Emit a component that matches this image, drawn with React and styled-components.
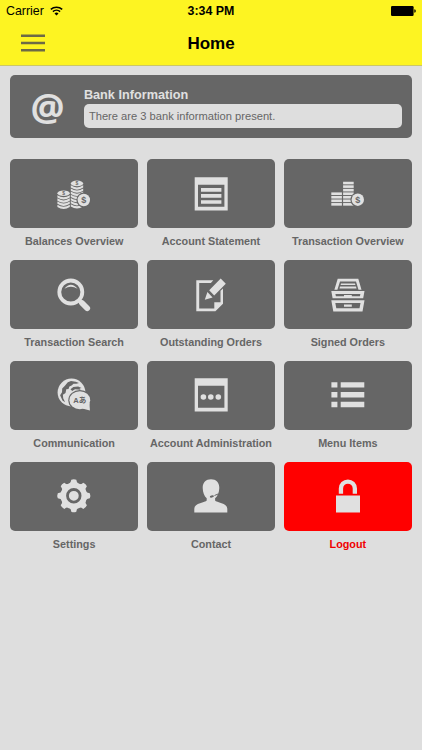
import React from 'react'
import styled, { createGlobalStyle } from 'styled-components'

const LIGHT = '#e0e0e0'
const DARK = '#666666'

const tiles = [
    { label: 'Balances Overview', icon: 'coins' },
    { label: 'Account Statement', icon: 'statement' },
    { label: 'Transaction Overview', icon: 'stacks' },
    { label: 'Transaction Search', icon: 'search' },
    { label: 'Outstanding Orders', icon: 'edit' },
    { label: 'Signed Orders', icon: 'drawers' },
    { label: 'Communication', icon: 'globe' },
    { label: 'Account Administration', icon: 'admin' },
    { label: 'Menu Items', icon: 'list' },
    { label: 'Settings', icon: 'gear' },
    { label: 'Contact', icon: 'contact' },
    { label: 'Logout', icon: 'lock', danger: true },
]

const Dollar = ({ x, y, size }) => (
    <text x={x} y={y} fontSize={size} fontWeight="bold" textAnchor="middle" fill={DARK} fontFamily="Liberation Sans, sans-serif">$</text>
)

const Coin = ({ y }) => (
    <g>
        <circle cx="27.8" cy={y} r="7.4" fill={DARK} />
        <circle cx="27.8" cy={y} r="6.2" />
        <Dollar x="27.8" y={y + 3.2} size="9" />
    </g>
)

const CoinStack = ({ x, top, count }) => (
    <g>
        <ellipse cx={x} cy={top + 2.7} rx="6.2" ry="2.8" />
        {[...Array(count)].map((_, i) => (
            <path
                key={i}
                d={`M${x - 6.2} ${top + 4.6 + i * 3.15}q6.2 4.2 12.4 0v2.3q-6.2 4.2 -12.4 0z`}
            />
        ))}
        <Dollar x={x} y={top + 4.5} size="5" />
    </g>
)

const Window = () => (
    <path fillRule="evenodd" d="M1.7 1.2h33v33.2h-33zM5 8.8v22h26.4v-22z" />
)

const icons = {
    coins: (
        <>
            <CoinStack x={7.6} top={14.6} count={4} />
            <CoinStack x={21} top={4.7} count={7} />
            <Coin y={24} />
        </>
    ),
    statement: (
        <>
            <Window />
            <path d="M8 12.1h20.4v3.6H8zM8 18.1h20.4v3.6H8zM8 24.2h20.4v3.6H8z" />
        </>
    ),
    stacks: (
        <>
            {[0, 1, 2, 3].map((i) => <rect key={i} x="1.3" y={16.4 + i * 3.55} width="10.6" height="2.6" />)}
            {[0, 1, 2, 3, 4, 5, 6].map((i) => <rect key={i} x="13.1" y={5.75 + i * 3.55} width="10.6" height="2.6" />)}
            <Coin y={23.7} />
        </>
    ),
    search: (
        <>
            <circle cx="14.8" cy="15" r="11.5" fill="none" stroke={LIGHT} strokeWidth="3.8" />
            <path d="M8.4 11.7Q14.8 3.8 21.6 11.7Q14.8 7.6 8.4 11.7z" />
            <path d="M22.5 22.7l3 3" stroke={LIGHT} strokeWidth="3.8" />
            <path d="M26 26l5.2 5.2" stroke={LIGHT} strokeWidth="5.8" strokeLinecap="round" />
        </>
    ),
    edit: (
        <>
            <path d="M3.3 3.3h17l-2.4 2.6H6.2v25.5h15.1v-6.1h6.2V13.8l2.5-2.3v15.2l-7.6 7.6H3.3z" />
            <path d="M16.2 13.2L27.7 1.6l5.1 5.1-11.6 11.7zM14.4 15.1l5.2 5.3-7.8 2.4z" />
        </>
    ),
    drawers: (
        <>
            <path d="M7.7 1.7h20.6l3.2 11h-3L26 4.4H10L7.4 12.7h-3z" />
            <path d="M11 6.4h14l.4 1.7H10.6zM10 9.6h16l.5 2h-17z" />
            <path fillRule="evenodd" d="M1.3 14.1h33.2l-1.3 7.2H2.6zM5.4 16.9l.5 2.4h24l.5-2.4z" />
            <path fillRule="evenodd" d="M1.3 23.2h33.2l-2 11.2H3.3zM5.3 26l1 5.2h23.2l1-5.2z" />
            <path d="M14 18h7.8v2.6H14zM14 27.4h7.8v2.3H14z" />
        </>
    ),
    globe: (
        <>
            <circle cx="15.5" cy="15.5" r="13.9" />
            <path
                fill={DARK}
                d="M11.8 5.3l3.2-1.2 4.7.7 3.3 1.3-2.6.6-2.9.1-1.9 1.7-2.2.9-.9 2.5-2.2.4-.8 3.6-2.6 1.8.3 3.5 1.9 4-2.6-1.6-2.4-5.3 1.9-3.1.2-3.6 2.7-2.9z"
            />
            <path fill={DARK} d="M14.5 12.2l2.8-2.2 4.8-.6 3.5 1.6-2 .5 1 1.3-5.6-.6-2.8 1.8z" />
            <ellipse cx="23.8" cy="23.2" rx="11.5" ry="10.2" fill={DARK} />
            <ellipse cx="23.8" cy="23.2" rx="10.4" ry="9" />
            <path d="M33.5 26l.4 7.6-7.6-2z" />
            <text x="23.8" y="26" fontSize="7.6" fontWeight="bold" textAnchor="middle" fill={DARK} fontFamily="Liberation Sans, Noto Sans CJK JP, sans-serif">Aあ</text>
        </>
    ),
    admin: (
        <>
            <Window />
            <circle cx="10.4" cy="20" r="2.8" />
            <circle cx="17.8" cy="20" r="2.8" />
            <circle cx="25.3" cy="20" r="2.8" />
        </>
    ),
    list: (
        <>
            {[5.2, 15, 24.8].map((y) => (
                <path key={y} d={`M1.4 ${y}h6v5.4h-6zM10.7 ${y}h23.6v5.4h-23.6z`} />
            ))}
        </>
    ),
    gear: (
        <>
            <circle cx="17.8" cy="17.8" r="13.2" />
            {[0, 45, 90, 135, 180, 225, 270, 315].map((a) => (
                <path key={a} d="M12.8 6.2Q15 5 15.3 1.8Q17.8 .7 20.3 1.8Q20.6 5 22.8 6.2z" transform={`rotate(${a} 17.8 17.8)`} />
            ))}
            <circle cx="17.8" cy="17.8" r="6.3" fill="none" stroke={DARK} strokeWidth="2.8" />
        </>
    ),
    contact: (
        <>
            <path d="M18 1.3c5.2 0 8.4 3.4 8.3 8.6-.1 4.7-1.7 8-4.2 10.3v2.4c1 2.2 12.2 2.2 12.2 8.2v3.7h-33v-3.7c0-6 11.3-6 12.4-8.2v-2.4c-2.4-2.3-3.9-5.6-4-10.3C9.600 4.700 12.800 1.300 18 1.300z" />
            <path d="M18.7 18.7l2-.6M21.500 17.500l3.800-1.600" stroke={DARK} strokeWidth="1" fill="none" />
            <ellipse cx="18.7" cy="18.5" rx="1.9" ry="1.1" fill={DARK} transform="rotate(-12 18.7 18.5)" />
        </>
    ),
    lock: (
        <path d="M6 17.6h24v16.9H6zM8.8 15.7V10.5a9.1 9.1 0 0 1 18.2 0v5.200h-4.300V10.500a4.800 4.800 0 0 0-9.600 0v5.200z" />
    ),
}

const App = () => {
    return (
        <>
            <GlobalStyle />
            <Screen>
                <Header>
                    <StatusBar>
                        <Carrier>
                            Carrier
                            <svg width="13" height="10" viewBox="0 0 13 10" fill="none" stroke="#000">
                                <path d="M.8 3.4a8.3 8.3 0 0 1 11.4 0" strokeWidth="1.5" />
                                <path d="M2.9 5.6a5.2 5.2 0 0 1 7.2 0" strokeWidth="1.5" />
                                <path d="M6.5 9.5L4.5 7.4a2.9 2.9 0 0 1 4 0z" fill="#000" stroke="none" />
                            </svg>
                        </Carrier>
                        <Clock>3:34 PM</Clock>
                        <Battery>
                            <svg width="25" height="10" viewBox="0 0 25 10">
                                <rect width="22.6" height="10" rx="1.2" />
                                <path d="M23.3 3.3q1.5 .2 1.5 1.7t-1.5 1.7z" />
                            </svg>
                        </Battery>
                    </StatusBar>
                    <NavBar>
                        <MenuButton aria-label="Menu">
                            <svg width="24" height="18" viewBox="0 0 24 18" fill="#6d6a45">
                                <path d="M0 .6h24v2.400H0zM0 7.800h24v2.400H0zM0 15h24v2.400H0z" />
                            </svg>
                        </MenuButton>
                        <Title>Home</Title>
                    </NavBar>
                </Header>
                <Content>
                    <BankCard>
                        <AtSign>@</AtSign>
                        <BankText>
                            <BankTitle>Bank Information</BankTitle>
                            <BankMessage>There are 3 bank information present.</BankMessage>
                        </BankText>
                    </BankCard>
                    <Grid>
                        {tiles.map((tile) => (
                            <Item key={tile.label}>
                                <Tile $danger={tile.danger}>
                                    <svg width="36" height="36" viewBox="0 0 36 36" fill={LIGHT}>{icons[tile.icon]}</svg>
                                </Tile>
                                <Label $danger={tile.danger}>{tile.label}</Label>
                            </Item>
                        ))}
                    </Grid>
                </Content>
            </Screen>
        </>
    )
}

export default App


const GlobalStyle = createGlobalStyle`
    body{
        margin:0;
        background:#dedede;
        font-family:"Liberation Sans", Arial, sans-serif;
    }
    *{
        box-sizing:border-box;
    }
    svg{
        display:block;
    }
`

const Screen = styled.div`
    width:100%;
    min-height:100vh;
    background:#dedede;
`

const Header = styled.header`
    height:66px;
    background:#fdf422;
    border-bottom:1px solid #cbc767;
`

const StatusBar = styled.div`
    display:grid;
    grid-template-columns:1fr auto 1fr;
    align-items:center;
    height:22px;
    padding:0 6px;
`

const Carrier = styled.div`
    display:flex;
    align-items:center;
    gap:6px;
    font-size:12.4px;
`

const Clock = styled.div`
    font-size:12.4px;
    font-weight:bold;
`

const Battery = styled.div`
    justify-self:end;
`

const NavBar = styled.div`
    display:grid;
    grid-template-columns:1fr auto 1fr;
    align-items:center;
    height:42px;
    padding:0 21px;
`

const MenuButton = styled.button`
    width:24px;
    padding:0;
    border:none;
    background:none;
`

const Title = styled.h1`
    margin:0;
    padding-top:1px;
    font-size:17px;
    font-weight:bold;
`

const Content = styled.main`
    padding:9.4px 10.4px;
`

const BankCard = styled.section`
    display:flex;
    height:63px;
    padding:12.6px 10px 10px 20px;
    border-radius:5px;
    background:${DARK};
`

const AtSign = styled.div`
    width:53.5px;
    color:${LIGHT};
    font-family:"Open Sans", sans-serif;
    font-size:38px;
    font-weight:bold;
    line-height:36px;
`

const BankText = styled.div`
    flex:1;
`

const BankTitle = styled.h2`
    margin:0 0 1px;
    color:${LIGHT};
    font-size:12.7px;
    line-height:15px;
    font-weight:bold;
`

const BankMessage = styled.div`
    height:24.5px;
    padding-left:5px;
    border-radius:5px;
    background:#dedede;
    color:${DARK};
    font-size:11.15px;
    line-height:24px;
`

const Grid = styled.div`
    display:grid;
    grid-template-columns:repeat(3, 1fr);
    column-gap:9.3px;
    margin-top:21px;
`

const Item = styled.div`
    height:100.75px;
`

const Tile = styled.div`
    display:flex;
    align-items:center;
    justify-content:center;
    height:69px;
    border-radius:5px;
    background:${props => props.$danger ? '#ff0000' : DARK};
`

const Label = styled.div`
    padding-top:6px;
    color:${props => props.$danger ? '#f00000' : DARK};
    font-size:10.8px;
    font-weight:bold;
    line-height:14px;
    text-align:center;
    white-space:nowrap;
`
